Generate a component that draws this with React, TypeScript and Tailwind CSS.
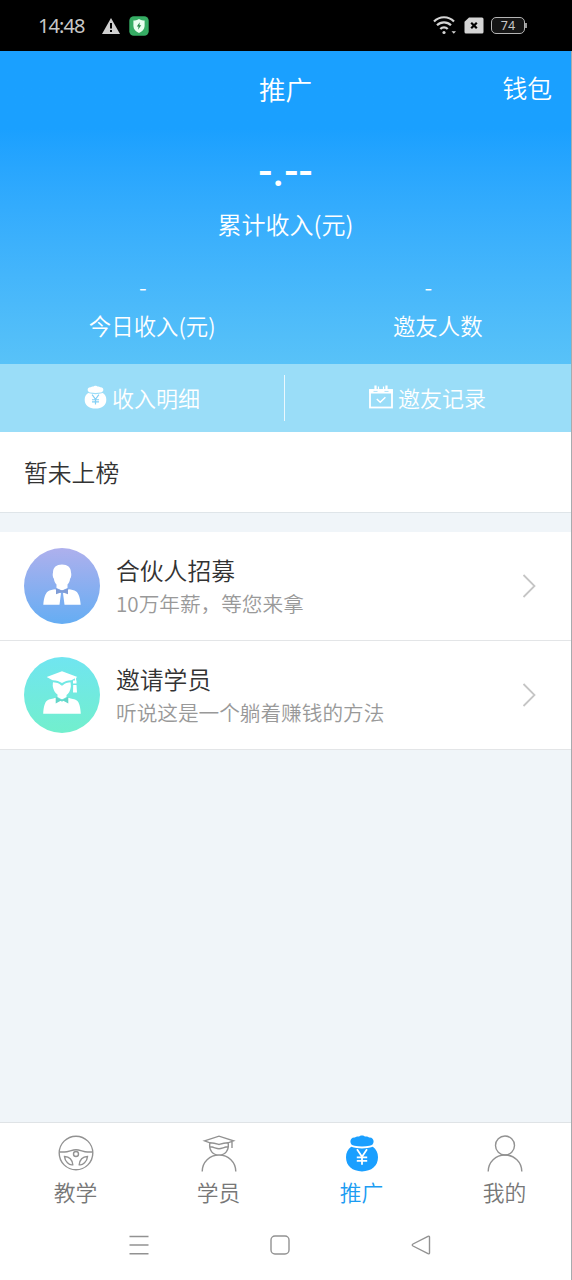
import type { ReactNode } from 'react';

function MoneyBag({ className, yen }: { className: string; yen: string }) {
  return (
    <svg viewBox="0 0 34 38" preserveAspectRatio="none" className={className} fill="currentColor">
      <path d="M9.500 11.800C6.800 11.500 5.400 9.800 5.400 7.500 5.400 5 7.200 3.200 10 3.600 11.500 2 13 2.400 14 2.500 15 1 19 1 20 2.500c1.200-.1 2.800-.4 4 1.100 2.800-.4 4.600 1.400 4.600 3.900 0 2.300-1.400 4-4.100 4.300-5 .9-10 .9-15 0Z" />
      <path d="M6.200 12.800c7 2.300 14.600 2.300 21.600 0 3.400 2.500 5.200 6 5.200 10.500C33 32 26.500 37.400 17 37.400S1 32 1 23.300c0-4.500 1.800-8 5.200-10.500Z" />
      <path d="m12 15.300 5 7.400 5-7.400M17 22.500v8.300M11.800 23.300h10.400M11.800 26.800h10.400" fill="none" stroke={yen} strokeWidth="1.800" />
    </svg>
  );
}

function CalendarCheck() {
  return (
    <svg viewBox="0 0 24 24" className="h-6 w-6" fill="none" stroke="white">
      <rect x="1" y="5" width="22" height="17.500" strokeWidth="1.800" />
      <path d="M.2 4.200h4.300v2.500h4V4.200h7v2.500h4V4.200h4.300V8.500H.2z" fill="white" stroke="none" />
      <path d="M6.500.5v5M17.500.5v5" strokeWidth="2.200" />
      <path d="M9.500 1.500v3.700M14.500 1.500v3.700" strokeWidth="1.200" />
      <path d="m7.800 14 3.400 3.200 5.200-5" strokeWidth="1.500" />
    </svg>
  );
}

function StatusBar() {
  return (
    <div className="flex h-[51px] shrink-0 items-center bg-black pl-[38px] text-[#c8c8c8]">
      <span className="w-[64px] font-['Noto_Sans'] text-[20px] tracking-[-0.9px] font-normal">14:48</span>
      <svg viewBox="0 0 18 16" className="h-4 w-[18px]">
        <path d="M9 0 18 16H0z" fill="#d0d0d0" />
        <path d="M9 5v5.500M9 12v2" stroke="black" strokeWidth="2" />
      </svg>
      <svg viewBox="0 0 20 20" className="ml-[9px] h-5 w-5">
        <rect x=".3" y=".3" width="19.400" height="19.400" rx="4.500" fill="#36ad64" />
        <path d="M10 3c2 1.200 4 1.400 5.600 1.600V10c0 3.300-2.500 5.600-5.600 7-3.100-1.400-5.600-3.700-5.600-7V4.600C6 4.400 8 4.200 10 3Z" fill="#eafff0" />
        <path d="m10.800 6.300-3 4.200h1.800l-.6 3.300 3.200-4.500h-1.800z" fill="#258647" />
      </svg>
      <svg viewBox="0 0 24 19" className="ml-[284px] h-[19px] w-6" fill="none" stroke="#d5d5d5">
        <path d="M1 5.500c5.500-5.700 14.500-5.700 20 0M4 9.300c4-4 10-4 14 0M7.300 13c2.100-2.300 5.300-2.300 7.400 0" strokeWidth="2.200" />
        <circle cx="11" cy="16.500" r="1.600" fill="#d5d5d5" stroke="none" />
        <path d="M18.500 15.200h4.500l-2.200 2.600z" fill="#d5d5d5" stroke="none" />
      </svg>
      <svg viewBox="0 0 20 17" className="ml-[7px] h-[17px] w-5">
        <path d="M5 .5h13q1.500 0 1.500 1.500v13q0 1.500-1.500 1.500H2Q.5 16.500.5 15V4.700z" fill="#d5d5d5" />
        <path d="m7.200 5.700 5.600 5.600m0-5.600-5.600 5.600" stroke="black" strokeWidth="2.200" />
      </svg>
      <div className="ml-[7px] flex h-[17px] w-[34px] items-center justify-center rounded-[5px] border-[1.500px] border-[#b4b4b4] bg-[#151515]">
        <span className="pt-px font-['Noto_Sans'] text-[12.500px] leading-none font-normal">74</span>
      </div>
      <div className="h-[5px] w-[2px] bg-[#999]" />
    </div>
  );
}

function PartnerAvatar() {
  return (
    <svg viewBox="0 0 76 76" className="h-[76px] w-[76px]">
      <defs>
        <linearGradient id="partner" x2="0" y2="1">
          <stop stopColor="#aeb0ed" />
          <stop offset="1" stopColor="#65adf3" />
        </linearGradient>
      </defs>
      <circle cx="38" cy="38" r="38" fill="url(#partner)" />
      <path d="M29 24.500c0-5.200 3.500-8 9-8s9 2.800 9 8c.6 2 .4 4.800-.9 6.300-.4 2.800-1.400 4.500-2.600 5.700V40L38 42.500 32.500 40v-3.500c-1.200-1.200-2.200-2.900-2.600-5.700-1.300-1.500-1.500-4.300-.9-6.300Z" fill="white" />
      <path d="M19.300 56.700c.6-6.700 2-11.200 4.500-13.200 2-1.500 5-1.800 7.400-2.200l5.800 4-1.500 11.400ZM56.700 56.700c-.6-6.700-2-11.200-4.500-13.200-2-1.500-5-1.800-7.400-2.200l-5.800 4 1.500 11.400Z" fill="white" />
      <path d="m32 40.500 4.800 1.700h2.400l4.800-1.700v5.700l-4.800-1.700h-2.400L32 46.200z" fill="#7f9cd6" />
    </svg>
  );
}

function StudentAvatar() {
  return (
    <svg viewBox="0 0 76 76" className="h-[76px] w-[76px]">
      <defs>
        <linearGradient id="student" x2="0" y2="1">
          <stop stopColor="#70e5f0" />
          <stop offset="1" stopColor="#72efcd" />
        </linearGradient>
      </defs>
      <circle cx="38" cy="38" r="38" fill="url(#student)" />
      <path d="M29 25.200c5 .3 7 2 9 3.600 2-1.600 4-3.300 8.500-3.600.4 1.500.3 3 .4 4.300-.6 4.500-2.300 7-4.400 8.500V40L38 42.500 33.500 40v-2.500c-2.200-1.500-4-4-4.800-8.500.2-1.300 0-2.300.3-3.800Z" fill="white" />
      <path d="m22.700 20 15.300-5.800L53.400 20l-6 3.200c-4 .2-6.800 1-9.400 2.900-2.600-1.900-5.400-2.700-9.400-2.900z" fill="white" />
      <path d="M51.500 20v5.500" stroke="white" strokeWidth="1.200" />
      <path d="M49 23.500h3.500v3H49zM49.200 28h3.300l.5 7.500h-4z" fill="white" />
      <path d="M19.200 56.700c.4-7 1.600-11.500 4-13.300 2-1.400 5.500-1.700 8.300-2.700l6.500 4 6.500-4c2.800 1 6.300 1.300 8.300 2.700 2.400 1.800 3.600 6.300 4 13.300Z" fill="white" />
      <path d="m31.700 39.800 5 2.600h2.600l5-2.600v6.700l-5-2.700h-2.600l-5 2.700z" fill="#63d6c9" />
    </svg>
  );
}

function PromoRow({ avatar, title, detail }: { avatar: ReactNode; title: string; detail: string }) {
  return (
    <div className="flex h-[109px] items-center border-b border-[#e3e5e7] bg-white pl-6 pr-[35px]">
      {avatar}
      <div className="ml-4 flex-1">
        <div className="text-[23.800px] leading-[34px] text-[#333]">{title}</div>
        <div className="text-[20.650px] leading-[33px] text-[#999]">{detail}</div>
      </div>
      <svg viewBox="0 0 14 24" className="h-6 w-[14px]" fill="none" stroke="#c5c5c5" strokeWidth="1.800">
        <path d="m1.500 1 11 11-11 11" />
      </svg>
    </div>
  );
}

function Tab({ icon, label, active = false }: { icon: ReactNode; label: string; active?: boolean }) {
  return (
    <div className={active ? 'flex w-[143px] shrink-0 flex-col items-center pt-[11px] text-[#1b9cf2]' : 'flex w-[143px] shrink-0 flex-col items-center pt-[11px] text-[#777]'}>
      {icon}
      <span className="mt-[4px] text-[21.800px] leading-[32px]">{label}</span>
    </div>
  );
}

const lineIcon = 'h-[38px] w-[38px] fill-none stroke-[#929292] stroke-[1.4]';

export default function App() {
  return (
    <div className="flex h-[1280px] w-[572px] flex-col overflow-hidden bg-[#f0f5f9] font-['Noto_Sans_CJK_SC',sans-serif] font-[350]">
      <StatusBar />
      <div className="flex flex-1 flex-col border-r border-black/30">
        <header className="h-[313px] bg-linear-to-b from-[#1aa0ff] from-25% to-[#58c2f8] text-white">
          <div className="grid h-[76px] grid-cols-3 items-center">
            <span />
            <h1 className="text-center text-[26.600px] leading-[40px] font-[350]">推广</h1>
            <span className="-mt-[5px] pr-[19px] text-right text-[24.800px] leading-[36px]">钱包</span>
          </div>
          <div className="flex flex-col items-center pt-[18px]">
            <div className="h-[61px] font-['Roboto'] text-[42px] leading-[54px] font-medium">-.--</div>
            <div className="text-[24px] leading-[36px]">累计收入(元)</div>
          </div>
          <div className="mt-[26px] grid grid-cols-2 text-center text-[22.400px]">
            <div>
              <div className="h-[40px] leading-[36px]">-</div>
              <div className="pl-[19px] leading-[34px]">今日收入(元)</div>
            </div>
            <div>
              <div className="h-[40px] leading-[36px]">-</div>
              <div className="pl-[19px] leading-[34px]">邀友人数</div>
            </div>
          </div>
        </header>
        <div className="flex h-[68px] items-center bg-[#9addf8] text-[22px] text-white">
          <div className="flex w-[284px] items-center justify-center gap-[5px] pb-[2px]">
            <MoneyBag className="h-6 w-[23px]" yen="#82cff5" />
            <span>收入明细</span>
          </div>
          <div className="h-[46px] w-px bg-white/80" />
          <div className="flex flex-1 items-center justify-center gap-[5px] pr-px pb-[2px]">
            <CalendarCheck />
            <span>邀友记录</span>
          </div>
        </div>
        <div className="flex h-[81px] items-center border-b border-[#dfe5e9] bg-white pl-6 text-[23.800px] text-[#333]">暂未上榜</div>
        <div className="mt-[19px]">
          <PromoRow avatar={<PartnerAvatar />} title="合伙人招募" detail="10万年薪，等您来拿" />
          <PromoRow avatar={<StudentAvatar />} title="邀请学员" detail="听说这是一个躺着赚钱的方法" />
        </div>
        <div className="flex-1" />
        <nav className="flex h-[88px] border-t border-[#dfe3e6] bg-white pl-[4px]">
          <Tab
            label="教学"
            icon={
              <svg viewBox="0 0 38 38" className={lineIcon}>
                <circle cx="19" cy="19" r="16.800" />
                <path d="M2.500 18h5c4 0 7.500-2.300 11.500-2.300s7.500 2.300 11.500 2.300h5" />
                <circle cx="19" cy="20" r="2.500" />
                <path d="M7.500 22.500c4.500.2 7.800 3.200 8.300 8.300-3.500.8-8-3.300-8.300-8.300ZM30.500 22.500c-4.500.2-7.800 3.200-8.300 8.300 3.500.8 8-3.300 8.300-8.300Z" />
              </svg>
            }
          />
          <Tab
            label="学员"
            icon={
              <svg viewBox="0 0 38 38" className={lineIcon}>
                <path d="M4.500 6.800 19 2.200l14.500 4.600-5.500 2c-4 0-6 .7-9 1.700-3-1-5-1.700-9-1.700zM32 7.500V14M9.800 9c-1 7.500 3 12 9.200 12s10.200-4.500 9.200-12M10 12.800c4 .3 6 1.900 9 1.900s5-1.600 9-1.900M2.200 37.500c0-9.500 7.500-16.500 16.800-16.500s16.800 7 16.800 16.500" />
              </svg>
            }
          />
          <Tab active label="推广" icon={<MoneyBag className="h-[38px] w-[34px] text-[#1a9fff]" yen="white" />} />
          <Tab
            label="我的"
            icon={
              <svg viewBox="0 0 38 38" className={lineIcon}>
                <circle cx="19" cy="11.500" r="9.500" />
                <path d="M2.200 37.500c0-9.500 7.500-16.500 16.800-16.500s16.800 7 16.800 16.500" />
              </svg>
            }
          />
        </nav>
        <div className="flex h-[70px] justify-center gap-[121px] bg-white pt-[25px] pr-[11px]">
          <svg viewBox="0 0 20 20" className="h-5 w-5 fill-none stroke-[#929292] stroke-[1.4]">
            <path d="M.5 1.500h19M.5 10h19M.5 18.700h19" />
          </svg>
          <svg viewBox="0 0 20 20" className="h-5 w-5 fill-none stroke-[#929292] stroke-[1.4]">
            <rect x="1" y="1" width="18" height="18" rx="4" />
          </svg>
          <svg viewBox="0 0 20 20" className="h-5 w-5 fill-none stroke-[#929292] stroke-[1.4]">
            <path d="M17 1.300 2 9q-1.500 1 0 2l15 7.700q1.500.5 1.500-1V2.300q0-1.500-1.500-1Z" />
          </svg>
        </div>
      </div>
    </div>
  );
}
